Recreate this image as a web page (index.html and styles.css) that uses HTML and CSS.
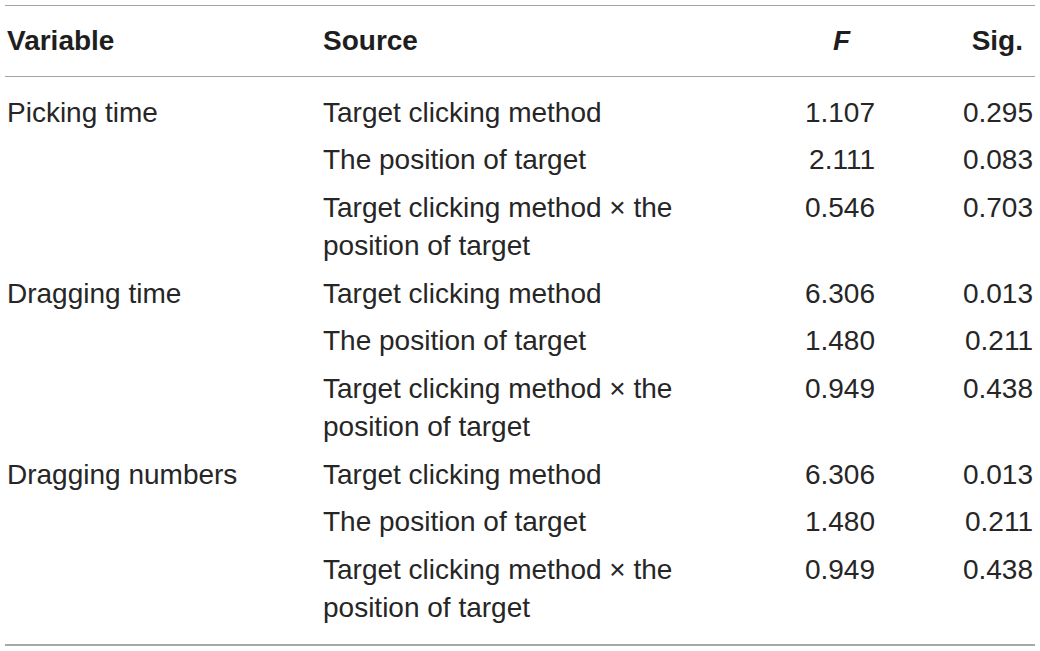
FILE: index.html
```html
<!DOCTYPE html>
<html>
<head>
<meta charset="utf-8">
<link rel="stylesheet" href="styles.css">
</head>
<body>
<div class="wrap">
<table class="anova">
  <colgroup>
    <col class="c-var">
    <col class="c-src">
    <col class="c-f">
    <col class="c-sig">
  </colgroup>
  <thead>
    <tr>
      <th class="txt">Variable</th>
      <th class="txt">Source</th>
      <th class="num h-f"><i>F</i></th>
      <th class="num h-sig">Sig.</th>
    </tr>
  </thead>
  <tbody>
    <tr class="first">
      <td class="txt">Picking time</td>
      <td class="txt">Target clicking method</td>
      <td class="num f">1.107</td>
      <td class="num sig">0.295</td>
    </tr>
    <tr>
      <td class="txt"></td>
      <td class="txt">The position of target</td>
      <td class="num f">2.111</td>
      <td class="num sig">0.083</td>
    </tr>
    <tr>
      <td class="txt"></td>
      <td class="txt">Target clicking method × the position of target</td>
      <td class="num f">0.546</td>
      <td class="num sig">0.703</td>
    </tr>
    <tr>
      <td class="txt">Dragging time</td>
      <td class="txt">Target clicking method</td>
      <td class="num f">6.306</td>
      <td class="num sig">0.013</td>
    </tr>
    <tr>
      <td class="txt"></td>
      <td class="txt">The position of target</td>
      <td class="num f">1.480</td>
      <td class="num sig">0.211</td>
    </tr>
    <tr>
      <td class="txt"></td>
      <td class="txt">Target clicking method × the position of target</td>
      <td class="num f">0.949</td>
      <td class="num sig">0.438</td>
    </tr>
    <tr>
      <td class="txt">Dragging numbers</td>
      <td class="txt">Target clicking method</td>
      <td class="num f">6.306</td>
      <td class="num sig">0.013</td>
    </tr>
    <tr>
      <td class="txt"></td>
      <td class="txt">The position of target</td>
      <td class="num f">1.480</td>
      <td class="num sig">0.211</td>
    </tr>
    <tr class="last">
      <td class="txt"></td>
      <td class="txt">Target clicking method × the position of target</td>
      <td class="num f">0.949</td>
      <td class="num sig">0.438</td>
    </tr>
  </tbody>
</table>
</div>
</body>
</html>
```
FILE: styles.css
```css
html, body {
  margin: 0;
  padding: 0;
  background: #ffffff;
}

.wrap {
  padding: 5px;
}

.anova {
  width: 1030px;
  table-layout: fixed;
  border-collapse: collapse;
  font-family: "Liberation Sans", Arial, sans-serif;
  font-size: 28px;
  line-height: 38px;
  color: #262626;
  border-top: 1px solid #a3a3a3;
  border-bottom: 2px solid #a8a8a8;
}

.c-var { width: 316px; }
.c-src { width: 439px; }
.c-f { width: 122px; }
.c-sig { width: 153px; }

.anova th,
.anova td {
  vertical-align: top;
  padding: 4.85px 2px;
}

.anova thead th {
  font-weight: bold;
  color: #1e1e1e;
  padding-top: 16px;
  padding-bottom: 16px;
  border-bottom: 1px solid #a3a3a3;
}

.anova thead th i {
  font-style: italic;
}

.txt { text-align: left; }
.num { text-align: right; }

.anova td.f { padding-right: 7px; }
.anova td.sig { padding-right: 2px; }

.anova th.h-f { padding-right: 32px; }
.anova th.h-sig { padding-right: 12px; }

.anova tr.first td { padding-top: 16.6px; }
.anova tr.last td { padding-bottom: 17px; }
```
